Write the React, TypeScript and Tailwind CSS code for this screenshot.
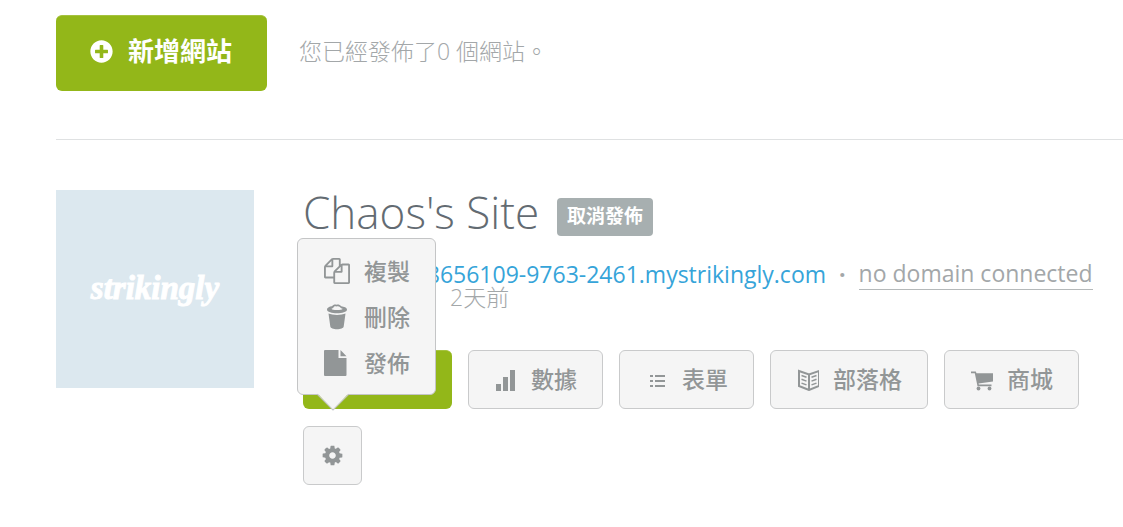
import { useState } from "react";
import type { ReactNode } from "react";
import { FaPlusCircle, FaPencilAlt } from "react-icons/fa";

function CopyIcon() {
    return (
        <svg viewBox="0 0 1792 1792" className="h-[26px] w-[26px]" fill="currentColor" aria-hidden="true">
            <path d="M1696 384q40 0 68 28t28 68v1216q0 40-28 68t-68 28h-960q-40 0-68-28t-28-68v-288h-544q-40 0-68-28t-28-68v-672q0-40 20-88t48-76l408-408q28-28 76-48t88-20h416q40 0 68 28t28 68v328q68-40 128-40h416zm-544 213l-299 299h299v-299zm-640-384l-299 299h299v-299zm196 647l316-316v-416h-384v416q0 40-28 68t-68 28h-416v640h512v-256q0-40 20-88t48-76zm956 804v-1152h-384v416q0 40-28 68t-68 28h-416v640h896z" />
        </svg>
    );
}

function TrashIcon() {
    return (
        <svg viewBox="0 0 26 26" className="h-[26px] w-[26px]" fill="currentColor" aria-hidden="true">
            <path d="M3 5.500C3 3.500 6 2.200 8 2.200C9 .8 11 .2 12.500 .8C14 .2 16 .8 17.200 2.200C20 2.500 23 3.800 23 5.500C23 8 18 9.200 13 9.200S3 8 3 5.500ZM7.500 4.800C8 5.800 10 6.100 13 6.100S18 5.800 18.700 4.800C17.500 4.500 16.700 4 16 3C14.500 2 13.500 2.200 12.600 2.600C11.500 2 10 2.200 9.500 3.500C9 4.300 8.300 4.600 7.500 4.800Z" />
            <path d="M4.500 9.600C8.500 11.400 17.500 11.400 21.500 9.600L19.700 22.600C19.500 24.300 16.500 25.300 13 25.300S6.500 24.300 6.300 22.600Z" />
        </svg>
    );
}

function PageIcon() {
    return (
        <svg viewBox="0 0 26 26" className="h-[26px] w-[26px]" fill="currentColor" aria-hidden="true">
            <path d="M1 0H14.500V8H22.500V25Q22.500 26 21.500 26H1Q0 26 0 25V1Q0 0 1 0ZM16.500 0L22.500 6.200H16.500Z" />
        </svg>
    );
}

function GearIcon() {
    return (
        <svg viewBox="0 0 1792 1792" className="h-[23px] w-[23px]" fill="currentColor" aria-hidden="true">
            <path d="M1152 896q0-106-75-181t-181-75-181 75-75 181 75 181 181 75 181-75 75-181zm512-109v222q0 12-8 23t-20 13l-185 28q-19 54-39 91 35 50 107 138 10 12 10 25t-9 23q-27 37-99 108t-94 71q-12 0-26-9l-138-108q-44 23-91 38-16 136-29 186-7 28-36 28h-222q-14 0-24.500-8.500t-11.500-21.500l-28-184q-49-16-90-37l-141 107q-10 9-25 9-14 0-25-11-126-114-165-168-7-10-7-23 0-12 8-23 15-21 51-66.500t54-70.500q-27-50-41-99l-183-27q-13-2-21-12.500t-8-23.500v-222q0-12 8-23t19-13l186-28q14-46 39-92-40-57-107-138-10-12-10-24 0-10 9-23 26-36 98.500-107.500t94.500-71.500q13 0 26 10l138 107q44-23 91-38 16-136 29-186 7-28 36-28h222q14 0 24.500 8.500t11.500 21.500l28 184q49 16 90 37l142-107q9-9 24-9 13 0 25 10 129 119 165 170 7 8 7 22 0 12-8 23-15 21-51 66.500t-54 70.500q26 50 41 98l183 28q13 2 21 12.500t8 23.500z" />
        </svg>
    );
}

function ChartIcon() {
    return (
        <svg viewBox="0 0 22 22" className="h-[22px] w-[22px]" fill="currentColor" aria-hidden="true">
            <path d="M1 15h5v7H1zM8 8h5v14H8zM15 1h5v21h-5z" />
        </svg>
    );
}

function ListIcon() {
    return (
        <svg viewBox="0 0 22 22" className="h-[22px] w-[22px]" fill="currentColor" aria-hidden="true">
            <path d="M4 6h3v2H4zM9 6h10v2H9zM4 11h3v2H4zM9 11h10v2H9zM4 16h3v2H4zM9 16h10v2H9z" />
        </svg>
    );
}

function BookIcon() {
    return (
        <svg viewBox="0 0 22 22" className="h-[22px] w-[22px]" fill="none" stroke="currentColor" aria-hidden="true">
            <path strokeWidth="2" d="M2 2L12 5.500L22 2V17L12 21L2 17ZM12 5.500V21" />
            <path strokeWidth="1.500" d="M4.500 6.500L9.500 8.300M4.500 10.300L9.500 12.100M4.500 14.100L9.500 15.900M19.500 6.500L14.500 8.300M19.500 10.300L14.500 12.100M19.500 14.100L14.500 15.900" />
        </svg>
    );
}

function CartIcon() {
    return (
        <svg viewBox="0 0 22 22" className="h-[22px] w-[22px]" fill="currentColor" aria-hidden="true">
            <path d="M0 2.500H4.800L5.500 4.300H22V12.500L7.500 14.500L7.900 15.600H20.500V17.300H6.500L3.800 4.200H0Z" />
            <circle cx="7.500" cy="19.500" r="1.900" />
            <circle cx="18.500" cy="19.500" r="1.900" />
        </svg>
    );
}

function ActionButton({ icon, children }: { icon: ReactNode; children: ReactNode }) {
    return (
        <button className="flex h-[59px] cursor-pointer items-center gap-[14px] rounded-md border border-[#c9cacb] bg-[#f5f5f5] pr-[25px] pl-[26px] text-[23px] font-medium text-[#929697] hover:bg-white">
            {icon}
            <span>{children}</span>
        </button>
    );
}

function MenuItem({ icon, children }: { icon: ReactNode; children: ReactNode }) {
    return (
        <li>
            <button className="flex h-[46px] w-full cursor-pointer items-center gap-[14px] pl-[26px] text-[23px] font-medium text-[#929697] hover:text-gray-600">
                {icon}
                <span>{children}</span>
            </button>
        </li>
    );
}

// Gear button with the menu that opens above it
function SettingsMenu() {
    const [isOpen, setIsOpen] = useState(true);

    return (
        <div className="relative">
            <button
                aria-label="設定"
                aria-expanded={isOpen}
                onClick={() => setIsOpen(!isOpen)}
                className="flex h-[59px] w-[59px] cursor-pointer items-center justify-center rounded-md border border-[#c9cacb] bg-[#f5f5f5] text-[#929697]"
            >
                <GearIcon />
            </button>
            {isOpen && (
                <div className="absolute bottom-full -left-[6px] mb-[31px] w-[139px] rounded-md border border-[#c4c5c6] bg-[#f5f5f5] pt-[9px] pb-[8px]">
                    <ul>
                        <MenuItem icon={<CopyIcon />}>複製</MenuItem>
                        <MenuItem icon={<TrashIcon />}>刪除</MenuItem>
                        <MenuItem icon={<PageIcon />}>發佈</MenuItem>
                    </ul>
                    <svg viewBox="0 0 32 17" className="absolute top-full left-[19px] -mt-px h-[18px] w-8" preserveAspectRatio="none" aria-hidden="true">
                        <path d="M0 0L16 16L32 0Z" fill="#f5f5f5" />
                        <path d="M0 1L16 16L32 1" fill="none" stroke="#c4c5c6" />
                    </svg>
                </div>
            )}
        </div>
    );
}

export default function App() {
    return (
        <main className="bg-white pl-14 font-['Open_Sans','Noto_Sans_CJK_TC',sans-serif]">
            <header className="flex items-center gap-8 border-b border-[#dfe1e2] pt-[15px] pb-12">
                <button className="flex h-[76px] cursor-pointer items-center gap-[15px] rounded-md border-t border-[#a5c23f] bg-[#93b719] pr-[35px] pb-1 pl-[34px] text-[26px] font-bold text-white">
                    <FaPlusCircle className="text-[23px]" />
                    <span>新增網站</span>
                </button>
                <p className="pb-1 text-[23px] font-light text-[#a3a7a9]">您已經發佈了0 個網站。</p>
            </header>

            <section className="flex items-start gap-[49px] pt-[50px]">
                {/* Site thumbnail */}
                <div className="flex h-[198px] w-[198px] shrink-0 items-center justify-center bg-[#dce8ef]">
                    <span className="font-['Liberation_Serif',serif] text-[33px] font-bold text-white italic [-webkit-text-stroke:1px_white]">strikingly</span>
                </div>

                <div className="min-w-0 flex-1">
                    <div className="flex items-start gap-[18px]">
                        <h1 className="text-[44px] leading-[44px] font-light text-[#636b72]">Chaos's Site</h1>
                        <span className="mt-2 flex h-[38px] items-center rounded bg-[#a7afb0] px-[10px] pb-px text-[19px] font-bold text-white">取消發佈</span>
                    </div>
                    <div className="mt-[21px] flex items-center whitespace-nowrap text-[23px] leading-[32px]">
                        <a href="#" className="text-[#36a4d9]">https://site-8656109-9763-2461.mystrikingly.com</a>
                        <span className="px-[13px] font-bold text-[#a3a7a9]">·</span>
                        <a href="#" className="border-b border-[#b5b9ba] text-[#a3a7a9]">no domain connected</a>
                    </div>
                    <p className="flex gap-8 text-[23px] leading-[14px] font-light text-[#a3a7a9]">
                        <span>最後更新於</span>
                        <span>2天前</span>
                    </p>

                    <div className="mt-[46px] flex flex-wrap gap-x-4 gap-y-[17px]">
                        <button className="flex h-[59px] w-[149px] cursor-pointer items-center justify-center gap-3 rounded-md border-t border-[#a5c23f] bg-[#93b719] text-[23px] font-medium text-white">
                            <FaPencilAlt className="text-xl" />
                            <span>編輯</span>
                        </button>
                        <ActionButton icon={<ChartIcon />}>數據</ActionButton>
                        <ActionButton icon={<ListIcon />}>表單</ActionButton>
                        <ActionButton icon={<BookIcon />}>部落格</ActionButton>
                        <ActionButton icon={<CartIcon />}>商城</ActionButton>
                        <SettingsMenu />
                    </div>
                </div>
            </section>
        </main>
    );
}
